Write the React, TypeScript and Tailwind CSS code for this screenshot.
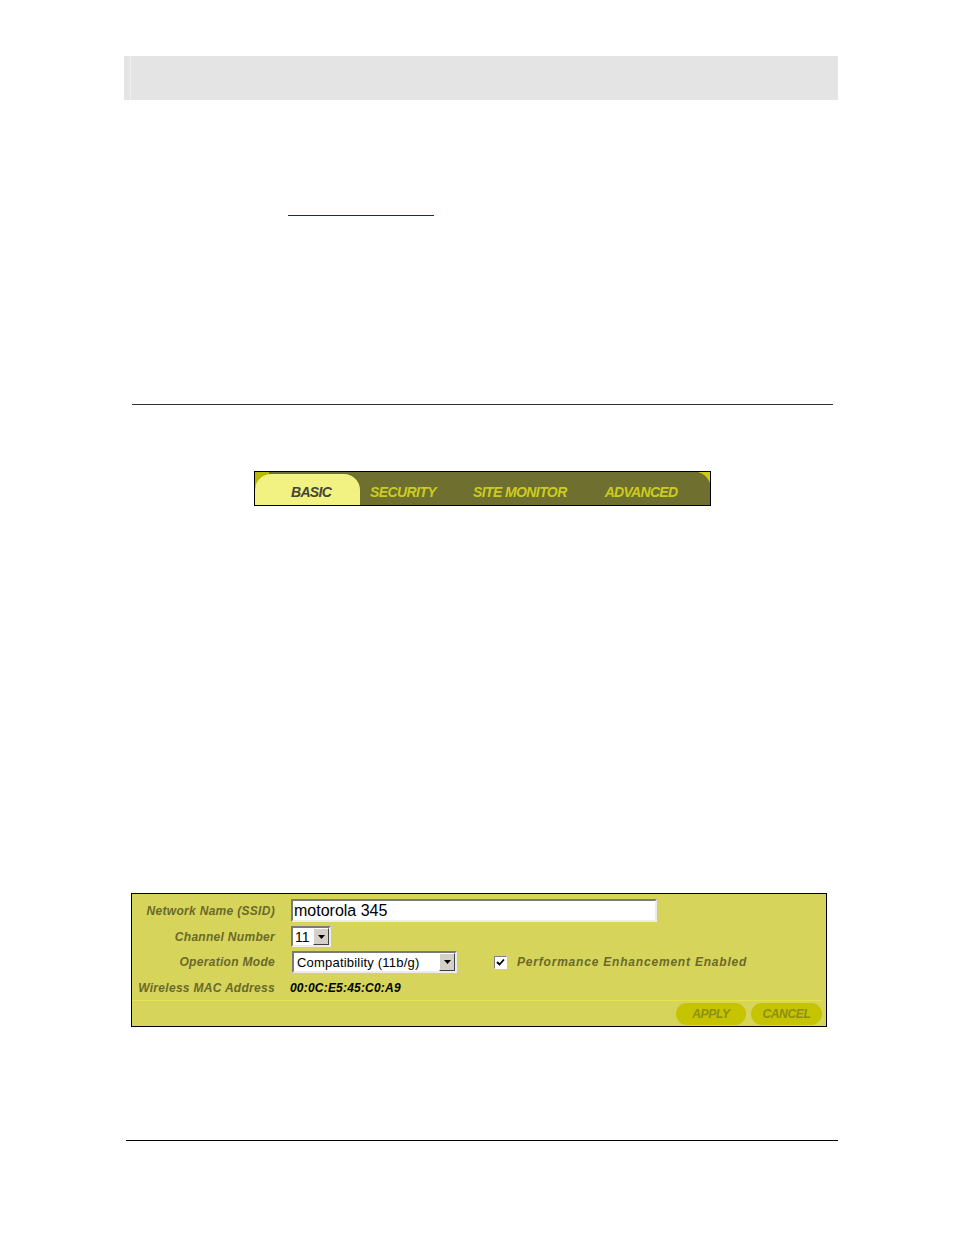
import React from "react";

const font = { fontFamily: '"Liberation Sans", Arial, sans-serif' } as React.CSSProperties;

function ArrowBtn({ h }: { h: number }) {
  return (
    <div
      className="flex w-[16px] items-center justify-center border border-t-[#ffffff] border-l-[#ffffff] border-b-[#404040] border-r-[#404040] bg-[#d4d0c8]"
      style={{ height: h }}
    >
      <svg width="7" height="4" viewBox="0 0 7 4">
        <path d="M0 0 H7 L3.5 4 Z" fill="#000" />
      </svg>
    </div>
  );
}

export default function App() {
  return (
    <div className="relative h-[1235px] w-[954px] bg-white" style={font}>
      <div className="pt-[56px] pl-[124px]">
        <div className="flex h-[44px] w-[714px] bg-[#e4e4e4]">
          <div className="ml-[6px] h-full w-px bg-[#efefef]" />
        </div>
      </div>

      <div className="mt-[115px] ml-[288px] h-px w-[146px] bg-[#660066]" />

      <div className="mt-[188px] ml-[132px] h-px w-[701px] bg-[#333333]" />

      {/* Tab bar */}
      <div className="mt-[66px] ml-[254px] w-[457px] border border-black">
        <div className="relative flex h-[33px] items-end bg-[#6f6f2f]">
          <div className="absolute left-0 top-0 h-[14px] w-[14px] bg-[#b8b800]" />
          <svg className="absolute right-0 top-0" width="12" height="11" viewBox="0 0 12 11">
            <path d="M0 0 H12 V11 Q8 2 0 0 Z" fill="#cccc10" />
          </svg>
          <div className="relative flex h-[31px] w-[105px] items-center rounded-tl-[16px] rounded-tr-[16px] bg-[#f2f282] pl-[36px] pt-[5px]">
            <span className="text-[14px] font-bold italic tracking-[-0.7px] text-[#454535]">BASIC</span>
          </div>
          <div className="flex h-[31px] items-center pt-[5px]">
            <span className="ml-[10px] text-[14px] font-bold italic tracking-[-0.6px] text-[#cccc20]">SECURITY</span>
            <span className="ml-[37px] text-[14px] font-bold italic tracking-[-0.6px] text-[#cccc20]">SITE MONITOR</span>
            <span className="ml-[38px] text-[14px] font-bold italic tracking-[-0.7px] text-[#cccc20]">ADVANCED</span>
          </div>
        </div>
      </div>

      {/* Form panel */}
      <div className="mt-[387px] ml-[131px] w-[696px] border border-black bg-[#d6d45a]">
        <div className="flex flex-col pt-[5px] pb-[1px]">
          <div className="flex h-[23px] items-center">
            <div className="w-[143px] text-right text-[12px] font-bold italic tracking-[0.3px] text-[#6a6a2a]">Network Name (SSID)</div>
            <div className="ml-[16px] flex h-[23px] w-[366px] items-center border-2 border-t-[#7a7a7a] border-l-[#7a7a7a] border-b-[#ececec] border-r-[#ececec] bg-white pl-[1px] text-[16px] text-black">
              motorola 345
            </div>
          </div>

          <div className="mt-[4px] flex h-[21px] items-center">
            <div className="w-[143px] text-right text-[12px] font-bold italic tracking-[0.3px] text-[#6a6a2a]">Channel Number</div>
            <div className="ml-[16px] flex h-[21px] w-[40px] items-center border-2 border-t-[#7a7a7a] border-l-[#7a7a7a] border-b-[#ececec] border-r-[#ececec] bg-white">
              <span className="flex-1 pl-[2px] text-[14px] leading-none text-black">11</span>
              <ArrowBtn h={17} />
            </div>
          </div>

          <div className="mt-[4px] flex h-[22px] items-center">
            <div className="w-[143px] text-right text-[12px] font-bold italic tracking-[0.3px] text-[#6a6a2a]">Operation Mode</div>
            <div className="ml-[17px] flex h-[22px] w-[165px] items-center border-2 border-t-[#7a7a7a] border-l-[#7a7a7a] border-b-[#ececec] border-r-[#ececec] bg-white">
              <span className="flex-1 pl-[3px] text-[13px] leading-none tracking-[0.2px] text-black">Compatibility (11b/g)</span>
              <ArrowBtn h={18} />
            </div>
            <div className="ml-[37px] flex h-[13px] w-[13px] items-center justify-center border border-t-[#808080] border-l-[#808080] border-b-[#ffffff] border-r-[#ffffff] bg-white">
              <svg width="9" height="8" viewBox="0 0 9 8">
                <path d="M1 4 L3.5 6.5 L8 1.5" stroke="#000" strokeWidth="1.8" fill="none" />
              </svg>
            </div>
            <span className="ml-[10px] text-[12px] font-bold italic tracking-[0.8px] text-[#6a6a2a]">
              Performance Enhancement Enabled
            </span>
          </div>

          <div className="mt-[5px] flex h-[20px] items-center">
            <div className="w-[143px] text-right text-[12px] font-bold italic tracking-[0.3px] text-[#6a6a2a]">Wireless MAC Address</div>
            <div className="ml-[15px] text-[12px] font-bold italic tracking-[0.2px] text-black">00:0C:E5:45:C0:A9</div>
          </div>

          <div className="mt-[2px] mr-[4px] h-px bg-[#e6e446]" />

          <div className="mt-[2px] flex h-[22px] justify-end gap-[5px] pr-[4px]">
            <div className="flex w-[70px] items-center justify-center rounded-full bg-[#c6c400] text-[12px] font-bold italic tracking-[-0.3px] text-[#8e8e12]">
              APPLY
            </div>
            <div className="flex w-[71px] items-center justify-center rounded-full bg-[#c6c400] text-[12px] font-bold italic tracking-[-0.3px] text-[#8e8e12]">
              CANCEL
            </div>
          </div>
        </div>
      </div>

      <div className="mt-[113px] ml-[126px] h-px w-[712px] bg-black" />
    </div>
  );
}
